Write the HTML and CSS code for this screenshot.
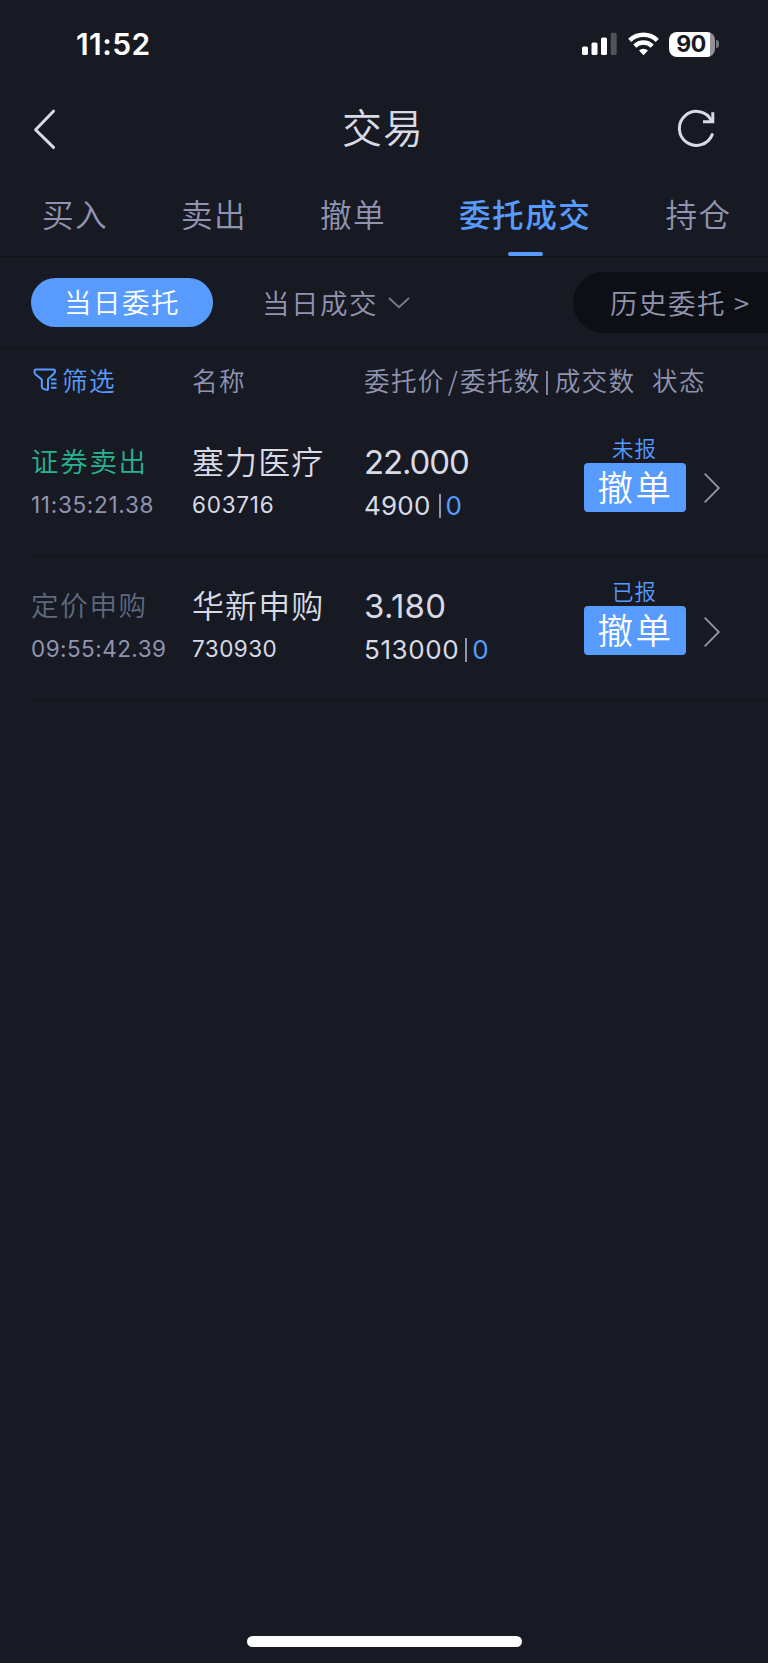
FILE: index.html
```html
<!DOCTYPE html>
<html lang="zh-CN">
<head>
<meta charset="utf-8">
<title>交易</title>
<link rel="stylesheet" href="styles.css">
</head>
<body>
<div class="screen">
  <div class="status-bar">
    <span class="clock">11:52</span>
    <div class="indicators">
      <svg class="signal" width="35" height="24" viewBox="0 0 35 24" fill="#fff">
        <rect x="0" y="14.5" width="6" height="8.5" rx="1.6"/>
        <rect x="9.5" y="10.5" width="6" height="12.5" rx="1.6"/>
        <rect x="19" y="5.5" width="6" height="17.5" rx="1.6"/>
        <rect x="28.7" y="0.8" width="6" height="22.2" rx="1.6" opacity=".25"/>
      </svg>
      <svg class="wifi" width="31" height="24" viewBox="0 0 31 24">
        <g fill="none" stroke="#fff" stroke-width="4.4">
          <path d="M1.7 8.4a19.6 19.6 0 0 1 27.6 0"/>
          <path d="M6.8 14.1a12.2 12.2 0 0 1 17.4 0"/>
        </g>
        <path d="M15.5 23.2 11 18.5a6.4 6.4 0 0 1 9 0z" fill="#fff"/>
      </svg>
      <div class="battery"><span class="battery-body">90</span><span class="battery-tip"></span></div>
    </div>
  </div>

  <header class="nav">
    <svg class="back" width="24" height="42" viewBox="0 0 24 42" fill="none" stroke="#d8dbe6" stroke-width="3" stroke-linecap="round" stroke-linejoin="round"><path d="M21.5 3.2 3.6 21.8 21.5 39.4"/></svg>
    <h1 class="title">交易</h1>
    <svg class="refresh" width="40" height="40" viewBox="0 0 40 40" fill="none" stroke="#d8dbe6" stroke-width="3"><path d="M35.2 26.6A17 17 0 1 1 34.5 12.6" stroke-linecap="round"/><path d="M26 13.7H35.8V4.2"/></svg>
  </header>

  <nav class="tabs">
    <a class="tab">买入</a>
    <a class="tab">卖出</a>
    <a class="tab">撤单</a>
    <a class="tab active">委托成交</a>
    <a class="tab">持仓</a>
  </nav>

  <div class="subtabs">
    <a class="pill">当日委托</a>
    <a class="deals">当日成交<svg class="caret" width="22" height="12" viewBox="0 0 22 12" fill="none" stroke="#777b94" stroke-width="1.8"><path d="M1 1 11 10.2 21 1"/></svg></a>
    <a class="history">历史委托<span class="more">&gt;</span></a>
  </div>

  <div class="list-head">
    <span class="filter">
      <svg class="funnel" width="24" height="24" viewBox="0 0 24 24" fill="none" stroke="#589bff" stroke-width="2" stroke-linejoin="round"><path d="M8.8 11.6 2.6 6.4Q1.2 5 1.4 2.9Q1.6 1.6 3 1.6H20.6Q22 1.6 22 3Q22 4.6 20.8 5.8L15 11.2V21Q15 22.2 13.7 21.8L10.1 20.6Q8.8 20 8.8 18.6Z"/><path d="M18 11.4h5.5M18 15.6h5.5M18 19.8h5.5"/></svg>筛选</span>
    <span class="head-name">名称</span>
    <span class="head-price">委托价<i class="slash">/</i>委托数<i class="bar"></i>成交数</span>
    <span class="head-state">状态</span>
  </div>

  <div class="order">
    <div class="cell"><div class="kind sell">证券卖出</div><div class="time narrow">11:35:21.38</div></div>
    <div class="cell"><div class="name">塞力医疗</div><div class="code narrow">603716</div></div>
    <div class="cell"><div class="price wide">22.000</div><div class="qty">4900<i class="divider"></i><b class="done">0</b></div></div>
    <div class="action"><div class="state">未报</div><div class="cancel">撤单</div></div>
    <svg class="chevron" width="18" height="32" viewBox="0 0 18 32" fill="none" stroke="#9194ab" stroke-width="1.8"><path d="M1.7 1.6 15.8 16 1.7 30.4"/></svg>
  </div>

  <div class="order second">
    <div class="cell"><div class="kind buy">定价申购</div><div class="time">09:55:42.39</div></div>
    <div class="cell"><div class="name">华新申购</div><div class="code">730930</div></div>
    <div class="cell"><div class="price">3.180</div><div class="qty long">513000<i class="divider"></i><b class="done">0</b></div></div>
    <div class="action"><div class="state">已报</div><div class="cancel">撤单</div></div>
    <svg class="chevron" width="18" height="32" viewBox="0 0 18 32" fill="none" stroke="#9194ab" stroke-width="1.8"><path d="M1.7 1.6 15.8 16 1.7 30.4"/></svg>
  </div>

  <div class="home-indicator"></div>
</div>
</body>
</html>
```
FILE: styles.css
```css
* { box-sizing: border-box; }
body { margin: 0; background: #171a23; }
i, b { font-style: normal; font-weight: inherit; }
svg { display: block; flex: none; }

.screen {
  width: 768px;
  height: 1663px;
  display: flex;
  flex-direction: column;
  overflow: hidden;
  background: #171a23;
  color: #9194b1;
  font-family: "Noto Sans CJK SC DemiLight", "Noto Sans CJK SC", sans-serif;
  font-weight: 350;
  white-space: nowrap;
}

.status-bar {
  height: 88px;
  flex: none;
  display: flex;
  justify-content: space-between;
  padding: 0 49px 0 76px;
  color: #fff;
  font-family: Inter, sans-serif;
}
.clock { line-height: 88px; font-size: 30px; font-weight: 600; letter-spacing: .4px; }
.indicators { display: flex; align-items: center; }
.signal { margin-right: 11px; }
.wifi { margin-right: 10px; }
.battery { display: flex; align-items: center; gap: 1px; }
.battery-body {
  width: 46px;
  height: 25px;
  border-radius: 8px;
  background: linear-gradient(90deg, #fff 41px, #929399 41px);
  color: #171a23;
  font-size: 23px;
  font-weight: 650;
  letter-spacing: -.4px;
  line-height: 25px;
  padding-right: 2px;
  text-align: center;
}
.battery-tip { width: 3px; height: 8px; border-radius: 0 3px 3px 0; background: #74767c; }

.nav {
  height: 84px;
  flex: none;
  display: flex;
  justify-content: space-between;
  padding: 0 51px 0 32px;
}
.back { margin-top: 20px; }
.title { margin: 0 0 0 33px; line-height: 76px; font-size: 40px; font-weight: 350; letter-spacing: 1px; color: #d8dbe6; }
.refresh { margin-top: 20px; }

.tabs {
  height: 85px;
  flex: none;
  display: flex;
  padding-left: 42px;
  border-bottom: 1px solid #12141b;
  font-size: 31.6px;
  letter-spacing: 1.4px;
  line-height: 82px;
}
.tab { margin-right: 73px; }
.active { color: #589bff; font-family: "Noto Sans CJK SC", sans-serif; font-weight: 500; letter-spacing: 1.5px; margin-right: 74px; position: relative; }
.active::after {
  content: "";
  position: absolute;
  left: 49px;
  top: 80px;
  width: 35px;
  height: 4px;
  border-radius: 2px;
  background: #589bff;
}

.subtabs {
  height: 91px;
  flex: none;
  display: flex;
  align-items: center;
  padding-left: 31px;
  border-bottom: 1px solid #101218;
  font-size: 27.5px;
  letter-spacing: 1.5px;
}
.pill {
  width: 182px;
  height: 49px;
  border-radius: 25px;
  background: #589bff;
  color: #fff;
  line-height: 46px;
  padding-left: 33px;
}
.deals { display: flex; align-items: center; gap: 10px; width: 311px; margin-left: 49px; line-height: 46px; }
.caret { margin-top: 1px; }
.history {
  flex: 1;
  height: 61px;
  border-radius: 31px 0 0 31px;
  background: #0d0f14;
  padding-left: 37px;
  line-height: 60px;
}
.more { margin-left: 8px; }

.list-head {
  height: 65px;
  flex: none;
  display: grid;
  grid-template-columns: 159px 172px 288px auto;
  padding-left: 33px;
  font-size: 25.6px;
  letter-spacing: 1.3px;
  line-height: 63px;
}
.filter { display: flex; color: #589bff; gap: 5px; }
.funnel { margin-top: 20px; }
.slash { margin: 0 1px 0 3px; }
.bar { display: inline-block; width: 2px; height: 24px; margin: 0 7px 0 5px; vertical-align: -4px; background: #8083a0; }

.order {
  height: 144px;
  flex: none;
  margin-left: 31px;
  display: grid;
  grid-template-columns: 161px 172px 219px 103px 18px;
  border-bottom: 1px solid #12141b;
  font-family: Inter, "Noto Sans CJK SC", sans-serif;
  line-height: 44px;
}
.second { height: 143px; margin-top: -.5px; }
.cell { padding-top: 25px; }
.kind, .name, .state, .cancel { font-family: "Noto Sans CJK SC DemiLight", "Noto Sans CJK SC", sans-serif; }
.kind { font-size: 27.5px; letter-spacing: 1.7px; }
.sell { color: #27b38f; }
.buy { color: #5f697f; }
.time, .code { font-size: 22.5px; margin-top: 1px; letter-spacing: .45px; font-weight: 375; }
.name { font-size: 32px; letter-spacing: 1.1px; color: #d8dbe6; }
.code { color: #d8dbe6; }
.time.narrow { letter-spacing: .7px; }
.code.narrow { letter-spacing: .75px; }
.price { font-size: 33px; line-height: 48px; color: #d8dbe6; font-weight: 375; letter-spacing: .3px; }
.price.wide { letter-spacing: -1.1px; }
.qty { font-size: 26px; color: #d8dbe6; display: flex; align-items: center; line-height: 40px; font-weight: 375; letter-spacing: .2px; }
.long { letter-spacing: .6px; }
.divider { width: 2px; height: 24px; margin: 0 5px 0 8px; background: #9194b1; }
.long .divider { margin-left: 6px; }
.done { color: #589bff; }
.action { padding-top: 20px; }
.state { font-size: 21.5px; letter-spacing: 1px; line-height: 30px; text-align: center; color: #589bff; }
.cancel {
  height: 49px;
  margin-left: .5px;
  border-radius: 4px;
  background: #589bff;
  color: #fff;
  font-size: 35.5px;
  letter-spacing: 2.4px;
  line-height: 45px;
  padding-left: 14px;
}
.second .action { padding-top: 19px; }
.chevron { margin: 59px 0 0 17px; }

.home-indicator { width: 275px; height: 11px; flex: none; margin: auto auto 16px 247px; border-radius: 6px; background: #fff; }
```
